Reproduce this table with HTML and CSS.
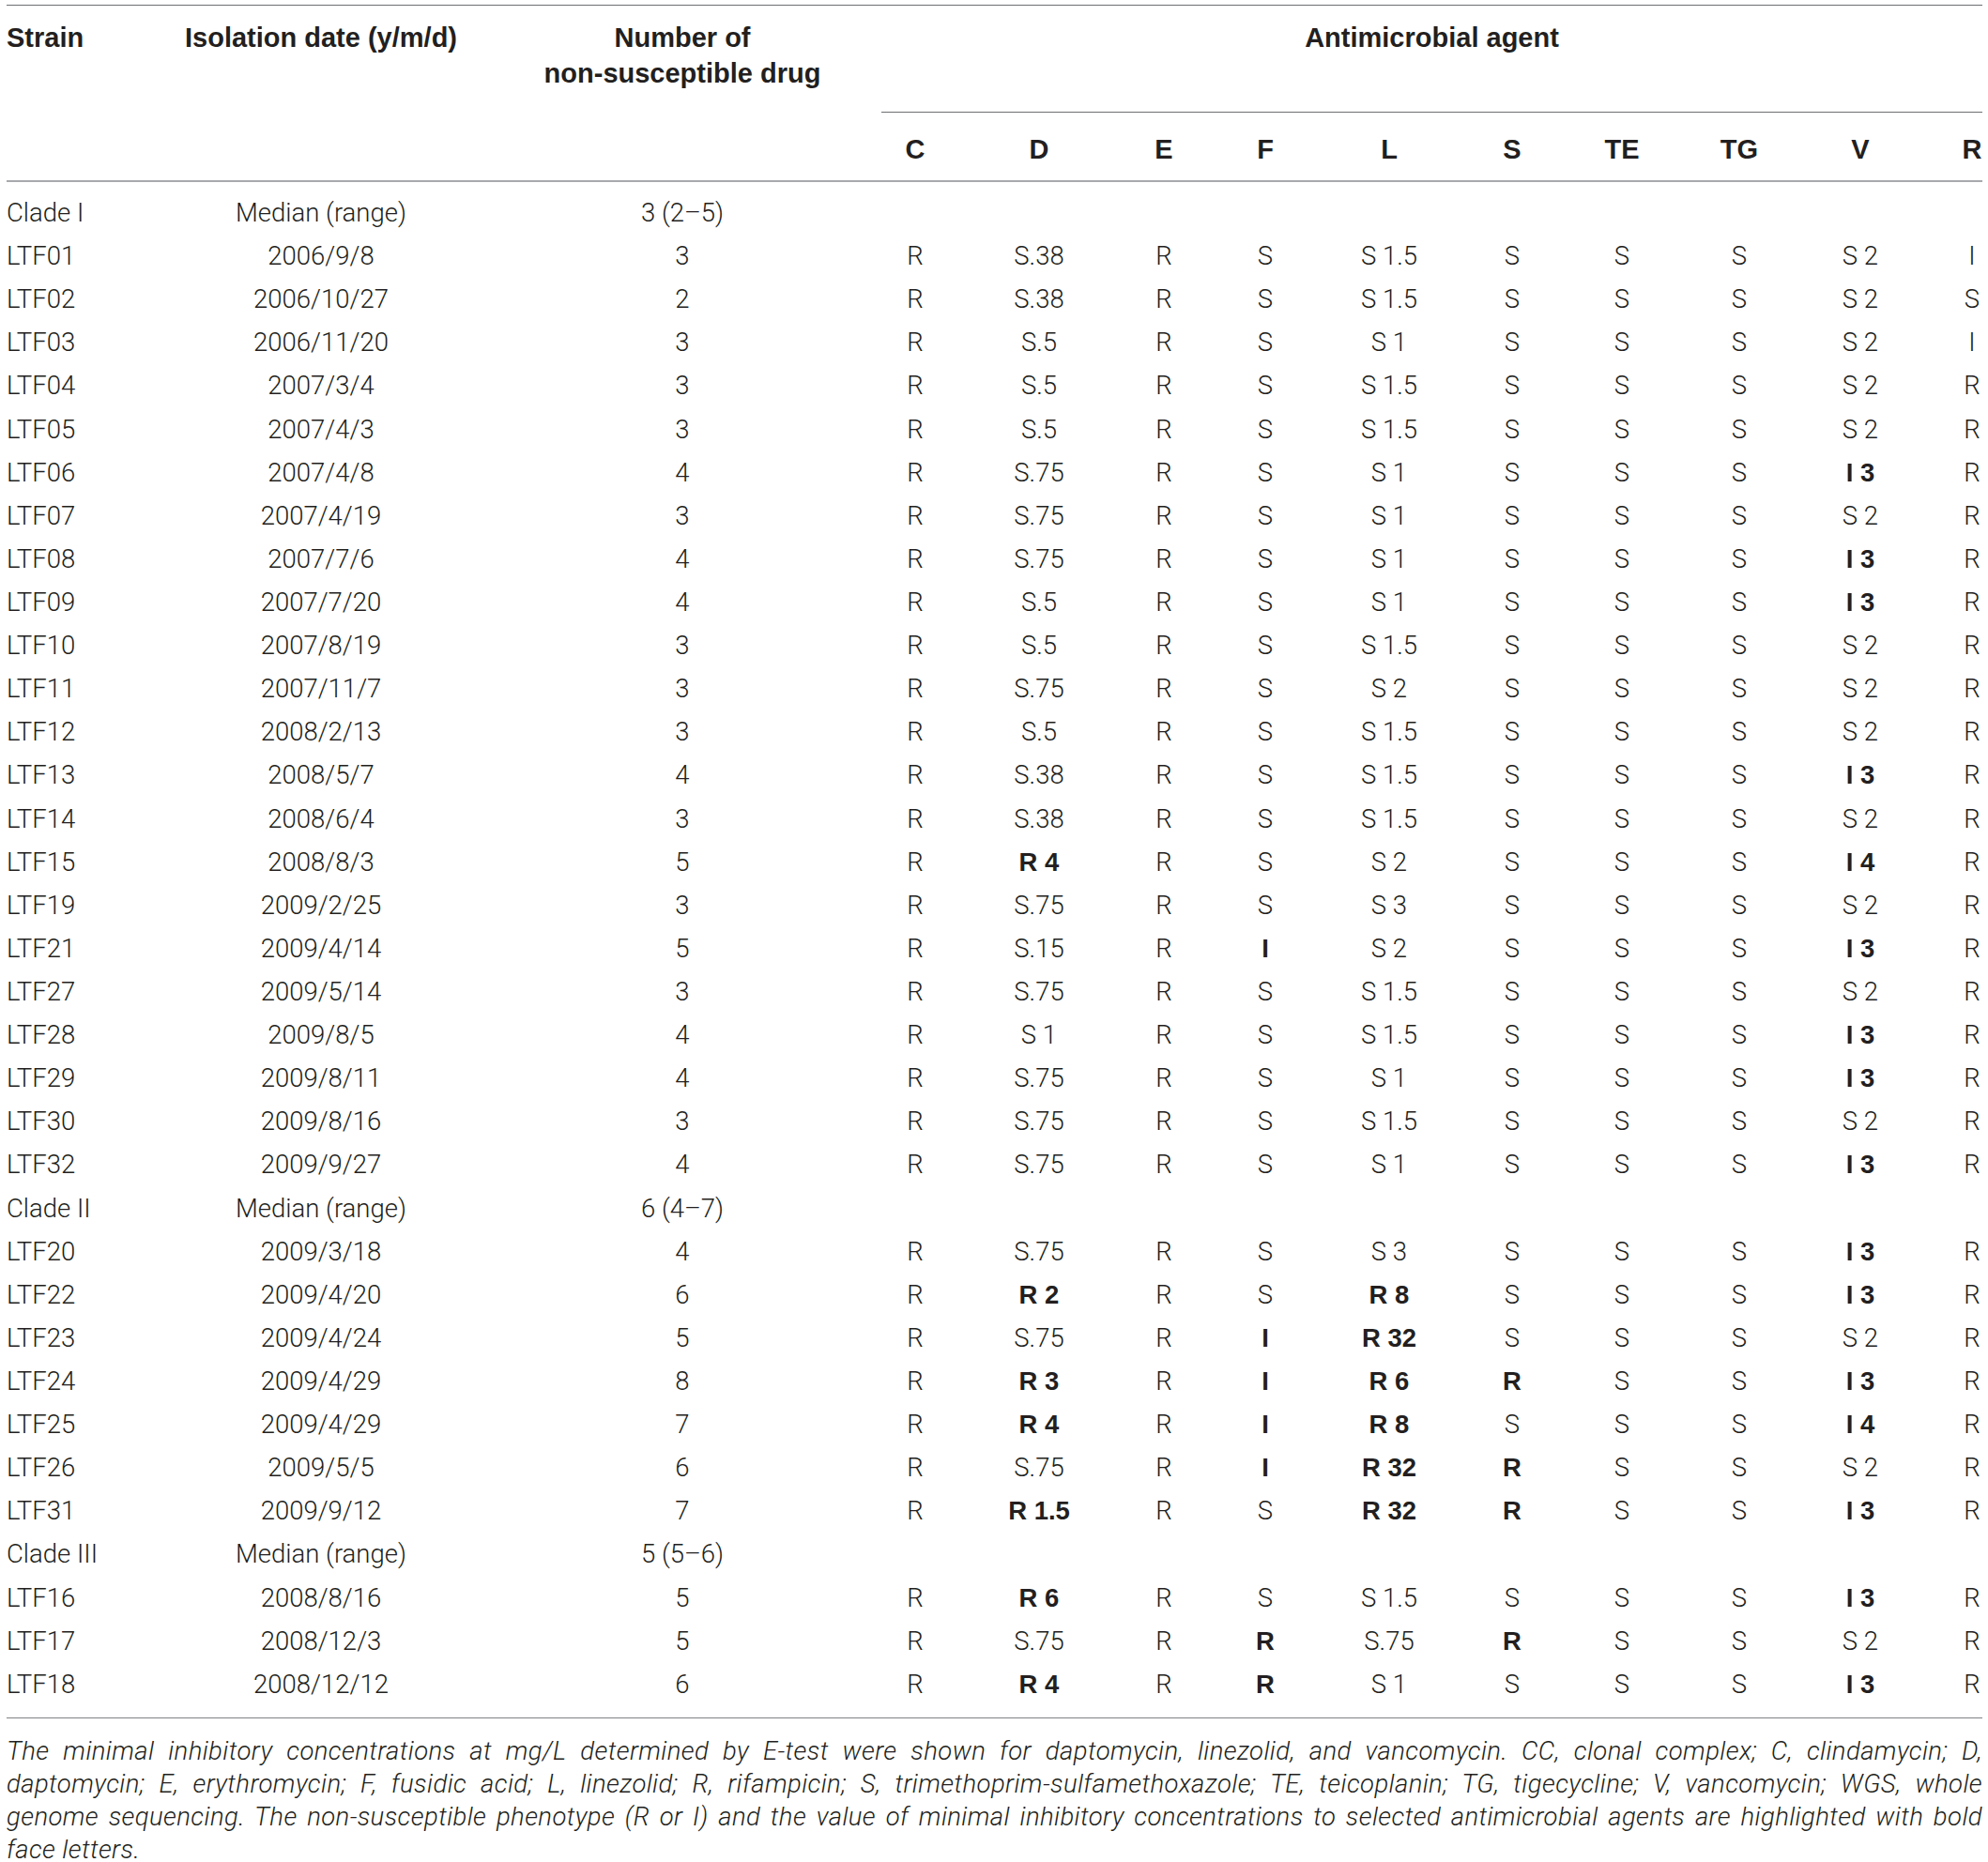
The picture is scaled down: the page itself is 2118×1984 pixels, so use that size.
FILE: index.html
```html
<!DOCTYPE html>
<html lang="en">
<head>
<meta charset="utf-8">
<title>Antimicrobial susceptibility table</title>
<link rel="stylesheet" href="styles.css">
</head>
<body>
<div class="page">
  <div class="table">
    <div class="head grid">
      <div class="h h-strain">Strain</div>
      <div class="h h-date">Isolation date (y/m/d)</div>
      <div class="h h-num">Number of<br>non-susceptible drug</div>
      <div class="h h-agent"><span>Antimicrobial agent</span></div>
      <div class="h sub">C</div>
      <div class="h sub">D</div>
      <div class="h sub">E</div>
      <div class="h sub">F</div>
      <div class="h sub">L</div>
      <div class="h sub">S</div>
      <div class="h sub">TE</div>
      <div class="h sub">TG</div>
      <div class="h sub">V</div>
      <div class="h sub">R</div>
    </div>
    <div class="body">
      <div class="row grid group"><div class="c l">Clade I</div><div class="c">Median (range)</div><div class="c">3 (2–5)</div></div>
      <div class="row grid"><div class="c l">LTF01</div><div class="c">2006/9/8</div><div class="c">3</div><div class="c">R</div><div class="c">S.38</div><div class="c">R</div><div class="c">S</div><div class="c">S 1.5</div><div class="c">S</div><div class="c">S</div><div class="c">S</div><div class="c">S 2</div><div class="c">I</div></div>
      <div class="row grid"><div class="c l">LTF02</div><div class="c">2006/10/27</div><div class="c">2</div><div class="c">R</div><div class="c">S.38</div><div class="c">R</div><div class="c">S</div><div class="c">S 1.5</div><div class="c">S</div><div class="c">S</div><div class="c">S</div><div class="c">S 2</div><div class="c">S</div></div>
      <div class="row grid"><div class="c l">LTF03</div><div class="c">2006/11/20</div><div class="c">3</div><div class="c">R</div><div class="c">S.5</div><div class="c">R</div><div class="c">S</div><div class="c">S 1</div><div class="c">S</div><div class="c">S</div><div class="c">S</div><div class="c">S 2</div><div class="c">I</div></div>
      <div class="row grid"><div class="c l">LTF04</div><div class="c">2007/3/4</div><div class="c">3</div><div class="c">R</div><div class="c">S.5</div><div class="c">R</div><div class="c">S</div><div class="c">S 1.5</div><div class="c">S</div><div class="c">S</div><div class="c">S</div><div class="c">S 2</div><div class="c">R</div></div>
      <div class="row grid"><div class="c l">LTF05</div><div class="c">2007/4/3</div><div class="c">3</div><div class="c">R</div><div class="c">S.5</div><div class="c">R</div><div class="c">S</div><div class="c">S 1.5</div><div class="c">S</div><div class="c">S</div><div class="c">S</div><div class="c">S 2</div><div class="c">R</div></div>
      <div class="row grid"><div class="c l">LTF06</div><div class="c">2007/4/8</div><div class="c">4</div><div class="c">R</div><div class="c">S.75</div><div class="c">R</div><div class="c">S</div><div class="c">S 1</div><div class="c">S</div><div class="c">S</div><div class="c">S</div><div class="c b">I 3</div><div class="c">R</div></div>
      <div class="row grid"><div class="c l">LTF07</div><div class="c">2007/4/19</div><div class="c">3</div><div class="c">R</div><div class="c">S.75</div><div class="c">R</div><div class="c">S</div><div class="c">S 1</div><div class="c">S</div><div class="c">S</div><div class="c">S</div><div class="c">S 2</div><div class="c">R</div></div>
      <div class="row grid"><div class="c l">LTF08</div><div class="c">2007/7/6</div><div class="c">4</div><div class="c">R</div><div class="c">S.75</div><div class="c">R</div><div class="c">S</div><div class="c">S 1</div><div class="c">S</div><div class="c">S</div><div class="c">S</div><div class="c b">I 3</div><div class="c">R</div></div>
      <div class="row grid"><div class="c l">LTF09</div><div class="c">2007/7/20</div><div class="c">4</div><div class="c">R</div><div class="c">S.5</div><div class="c">R</div><div class="c">S</div><div class="c">S 1</div><div class="c">S</div><div class="c">S</div><div class="c">S</div><div class="c b">I 3</div><div class="c">R</div></div>
      <div class="row grid"><div class="c l">LTF10</div><div class="c">2007/8/19</div><div class="c">3</div><div class="c">R</div><div class="c">S.5</div><div class="c">R</div><div class="c">S</div><div class="c">S 1.5</div><div class="c">S</div><div class="c">S</div><div class="c">S</div><div class="c">S 2</div><div class="c">R</div></div>
      <div class="row grid"><div class="c l">LTF11</div><div class="c">2007/11/7</div><div class="c">3</div><div class="c">R</div><div class="c">S.75</div><div class="c">R</div><div class="c">S</div><div class="c">S 2</div><div class="c">S</div><div class="c">S</div><div class="c">S</div><div class="c">S 2</div><div class="c">R</div></div>
      <div class="row grid"><div class="c l">LTF12</div><div class="c">2008/2/13</div><div class="c">3</div><div class="c">R</div><div class="c">S.5</div><div class="c">R</div><div class="c">S</div><div class="c">S 1.5</div><div class="c">S</div><div class="c">S</div><div class="c">S</div><div class="c">S 2</div><div class="c">R</div></div>
      <div class="row grid"><div class="c l">LTF13</div><div class="c">2008/5/7</div><div class="c">4</div><div class="c">R</div><div class="c">S.38</div><div class="c">R</div><div class="c">S</div><div class="c">S 1.5</div><div class="c">S</div><div class="c">S</div><div class="c">S</div><div class="c b">I 3</div><div class="c">R</div></div>
      <div class="row grid"><div class="c l">LTF14</div><div class="c">2008/6/4</div><div class="c">3</div><div class="c">R</div><div class="c">S.38</div><div class="c">R</div><div class="c">S</div><div class="c">S 1.5</div><div class="c">S</div><div class="c">S</div><div class="c">S</div><div class="c">S 2</div><div class="c">R</div></div>
      <div class="row grid"><div class="c l">LTF15</div><div class="c">2008/8/3</div><div class="c">5</div><div class="c">R</div><div class="c b">R 4</div><div class="c">R</div><div class="c">S</div><div class="c">S 2</div><div class="c">S</div><div class="c">S</div><div class="c">S</div><div class="c b">I 4</div><div class="c">R</div></div>
      <div class="row grid"><div class="c l">LTF19</div><div class="c">2009/2/25</div><div class="c">3</div><div class="c">R</div><div class="c">S.75</div><div class="c">R</div><div class="c">S</div><div class="c">S 3</div><div class="c">S</div><div class="c">S</div><div class="c">S</div><div class="c">S 2</div><div class="c">R</div></div>
      <div class="row grid"><div class="c l">LTF21</div><div class="c">2009/4/14</div><div class="c">5</div><div class="c">R</div><div class="c">S.15</div><div class="c">R</div><div class="c b">I</div><div class="c">S 2</div><div class="c">S</div><div class="c">S</div><div class="c">S</div><div class="c b">I 3</div><div class="c">R</div></div>
      <div class="row grid"><div class="c l">LTF27</div><div class="c">2009/5/14</div><div class="c">3</div><div class="c">R</div><div class="c">S.75</div><div class="c">R</div><div class="c">S</div><div class="c">S 1.5</div><div class="c">S</div><div class="c">S</div><div class="c">S</div><div class="c">S 2</div><div class="c">R</div></div>
      <div class="row grid"><div class="c l">LTF28</div><div class="c">2009/8/5</div><div class="c">4</div><div class="c">R</div><div class="c">S 1</div><div class="c">R</div><div class="c">S</div><div class="c">S 1.5</div><div class="c">S</div><div class="c">S</div><div class="c">S</div><div class="c b">I 3</div><div class="c">R</div></div>
      <div class="row grid"><div class="c l">LTF29</div><div class="c">2009/8/11</div><div class="c">4</div><div class="c">R</div><div class="c">S.75</div><div class="c">R</div><div class="c">S</div><div class="c">S 1</div><div class="c">S</div><div class="c">S</div><div class="c">S</div><div class="c b">I 3</div><div class="c">R</div></div>
      <div class="row grid"><div class="c l">LTF30</div><div class="c">2009/8/16</div><div class="c">3</div><div class="c">R</div><div class="c">S.75</div><div class="c">R</div><div class="c">S</div><div class="c">S 1.5</div><div class="c">S</div><div class="c">S</div><div class="c">S</div><div class="c">S 2</div><div class="c">R</div></div>
      <div class="row grid"><div class="c l">LTF32</div><div class="c">2009/9/27</div><div class="c">4</div><div class="c">R</div><div class="c">S.75</div><div class="c">R</div><div class="c">S</div><div class="c">S 1</div><div class="c">S</div><div class="c">S</div><div class="c">S</div><div class="c b">I 3</div><div class="c">R</div></div>
      <div class="row grid group"><div class="c l">Clade II</div><div class="c">Median (range)</div><div class="c">6 (4–7)</div></div>
      <div class="row grid"><div class="c l">LTF20</div><div class="c">2009/3/18</div><div class="c">4</div><div class="c">R</div><div class="c">S.75</div><div class="c">R</div><div class="c">S</div><div class="c">S 3</div><div class="c">S</div><div class="c">S</div><div class="c">S</div><div class="c b">I 3</div><div class="c">R</div></div>
      <div class="row grid"><div class="c l">LTF22</div><div class="c">2009/4/20</div><div class="c">6</div><div class="c">R</div><div class="c b">R 2</div><div class="c">R</div><div class="c">S</div><div class="c b">R 8</div><div class="c">S</div><div class="c">S</div><div class="c">S</div><div class="c b">I 3</div><div class="c">R</div></div>
      <div class="row grid"><div class="c l">LTF23</div><div class="c">2009/4/24</div><div class="c">5</div><div class="c">R</div><div class="c">S.75</div><div class="c">R</div><div class="c b">I</div><div class="c b">R 32</div><div class="c">S</div><div class="c">S</div><div class="c">S</div><div class="c">S 2</div><div class="c">R</div></div>
      <div class="row grid"><div class="c l">LTF24</div><div class="c">2009/4/29</div><div class="c">8</div><div class="c">R</div><div class="c b">R 3</div><div class="c">R</div><div class="c b">I</div><div class="c b">R 6</div><div class="c b">R</div><div class="c">S</div><div class="c">S</div><div class="c b">I 3</div><div class="c">R</div></div>
      <div class="row grid"><div class="c l">LTF25</div><div class="c">2009/4/29</div><div class="c">7</div><div class="c">R</div><div class="c b">R 4</div><div class="c">R</div><div class="c b">I</div><div class="c b">R 8</div><div class="c">S</div><div class="c">S</div><div class="c">S</div><div class="c b">I 4</div><div class="c">R</div></div>
      <div class="row grid"><div class="c l">LTF26</div><div class="c">2009/5/5</div><div class="c">6</div><div class="c">R</div><div class="c">S.75</div><div class="c">R</div><div class="c b">I</div><div class="c b">R 32</div><div class="c b">R</div><div class="c">S</div><div class="c">S</div><div class="c">S 2</div><div class="c">R</div></div>
      <div class="row grid"><div class="c l">LTF31</div><div class="c">2009/9/12</div><div class="c">7</div><div class="c">R</div><div class="c b">R 1.5</div><div class="c">R</div><div class="c">S</div><div class="c b">R 32</div><div class="c b">R</div><div class="c">S</div><div class="c">S</div><div class="c b">I 3</div><div class="c">R</div></div>
      <div class="row grid group"><div class="c l">Clade III</div><div class="c">Median (range)</div><div class="c">5 (5–6)</div></div>
      <div class="row grid"><div class="c l">LTF16</div><div class="c">2008/8/16</div><div class="c">5</div><div class="c">R</div><div class="c b">R 6</div><div class="c">R</div><div class="c">S</div><div class="c">S 1.5</div><div class="c">S</div><div class="c">S</div><div class="c">S</div><div class="c b">I 3</div><div class="c">R</div></div>
      <div class="row grid"><div class="c l">LTF17</div><div class="c">2008/12/3</div><div class="c">5</div><div class="c">R</div><div class="c">S.75</div><div class="c">R</div><div class="c b">R</div><div class="c">S.75</div><div class="c b">R</div><div class="c">S</div><div class="c">S</div><div class="c">S 2</div><div class="c">R</div></div>
      <div class="row grid"><div class="c l">LTF18</div><div class="c">2008/12/12</div><div class="c">6</div><div class="c">R</div><div class="c b">R 4</div><div class="c">R</div><div class="c b">R</div><div class="c">S 1</div><div class="c">S</div><div class="c">S</div><div class="c">S</div><div class="c b">I 3</div><div class="c">R</div></div>
    </div>
  </div>
  <p class="note"><span class="ln">The minimal inhibitory concentrations at mg/L determined by E-test were shown for daptomycin, linezolid, and vancomycin. CC, clonal complex; C, clindamycin; D,</span> <span class="ln">daptomycin; E, erythromycin; F, fusidic acid; L, linezolid; R, rifampicin; S, trimethoprim-sulfamethoxazole; TE, teicoplanin; TG, tigecycline; V, vancomycin; WGS, whole</span> <span class="ln">genome sequencing. The non-susceptible phenotype (R or I) and the value of minimal inhibitory concentrations to selected antimicrobial agents are highlighted with bold</span> <span class="ln last">face letters.</span></p>
</div>
</body>
</html>
```

FILE: styles.css
```css
html, body {
  margin: 0;
  padding: 0;
  background: #ffffff;
}

body {
  font-family: "Liberation Sans", Arial, sans-serif;
  color: #231f20;
}

.page {
  width: 2105px;
  padding: 5px 0 0 7px;
}

.table {
  border-top: 1px solid #6d6e71;
  border-bottom: 1px solid #808285;
}

.grid {
  display: grid;
  grid-template-columns: 105px 460px 310px 186px 78px 188px 28px 236px 26px 208px 42px 216px 22px;
}

/* header */
.head {
  grid-template-rows: 114px 72px;
  border-bottom: 2px solid #a7a9ac;
}

.h {
  font-size: 29px;
  font-weight: 700;
  line-height: 38px;
  text-align: center;
  white-space: nowrap;
}

.h-strain,
.h-date,
.h-num {
  grid-row: 1 / span 2;
  padding-top: 15px;
}

.h-strain {
  text-align: left;
}

.h-agent {
  grid-column: 4 / span 10;
  grid-row: 1;
  margin-left: 57px;
  padding-top: 15px;
  border-bottom: 1px solid #6d6e71;
}

.sub {
  grid-row: 2;
  padding-top: 20px;
}

/* body */
.body {
  padding: 10px 0 12px;
}

.row {
  height: 46.12px;
}

.c {
  font-family: Roboto, "Liberation Sans", Arial, sans-serif;
  font-weight: 300;
  font-size: 27.5px;
  line-height: 46.12px;
  text-align: center;
  white-space: nowrap;
}

.c.l {
  text-align: left;
}

.c.b {
  font-family: "Liberation Sans", Arial, sans-serif;
  font-weight: 700;
}

.note {
  margin: 17px 0 0;
  font-family: Roboto, "Liberation Sans", Arial, sans-serif;
  font-weight: 300;
  font-size: 27.5px;
  line-height: 35px;
  font-style: italic;
  letter-spacing: 0.4px;
}

.ln {
  display: block;
  text-align: justify;
  text-align-last: justify;
}

.ln.last {
  text-align-last: left;
}
```
